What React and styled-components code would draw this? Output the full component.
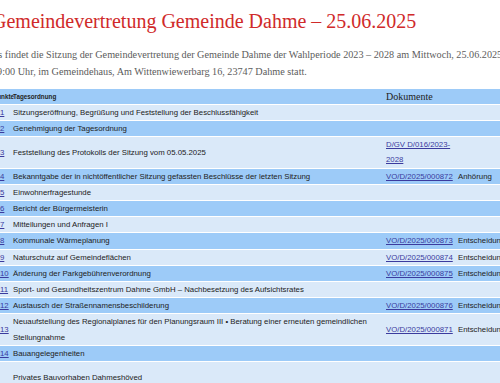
import React from 'react'
import styled, { createGlobalStyle, css } from 'styled-components'

const GlobalStyle = createGlobalStyle`
    body{
        margin: 0;
        background: #fff;
        overflow: hidden;
    }
`

const Page = styled.div`
    width: 560px;
    margin-left: -8px;
`

const Title = styled.h1`
    margin: 9px 0 0;
    font-family: 'Liberation Serif', 'Times New Roman', serif;
    font-weight: 400;
    font-size: 20px;
    line-height: 24px;
    color: #d02a2a;
    white-space: nowrap;
`

const Intro = styled.p`
    margin: 12.5px 0 0;
    width: 560px;
    font-family: 'Liberation Serif', 'Times New Roman', serif;
    font-size: 10.2px;
    line-height: 17px;
    color: #5c5c5c;
    white-space: nowrap;
`

const Table = styled.table`
    margin-top: 8px;
    width: 560px;
    border-collapse: separate;
    border-spacing: 0 1px;
    table-layout: fixed;
    font-family: 'Liberation Sans', Arial, sans-serif;
    font-size: 7.8px;
    line-height: 15.2px;
    color: #222;
`

const Row = styled.tr`
    background: ${({dark}) => dark ? '#9dcbf8' : '#dae9f9'};
`

const Head = styled.th`
    padding: 0 1px;
    text-align: left;
    vertical-align: middle;
    font-weight: 700;
    font-size: 6.3px;

    ${({serif}) => serif && css`
        font-family: 'Liberation Serif', 'Times New Roman', serif;
        font-weight: 400;
        font-size: 10px;
    `}
`

const Cell = styled.td`
    padding: 0 1px;
    vertical-align: middle;

    ${({sub}) => sub && css`
        padding-top: 8px;
    `}
`

const NumCell = styled(Cell)`
    padding-left: 8px;
`

const DocCell = styled(Cell)`
    padding: 0 4px 0 1px;
`

const Link = styled.a`
    color: #3b3b9e;
    text-decoration: underline;
`

const items = [
    {nr: '1', title: 'Sitzungseröffnung, Begrüßung und Feststellung der Beschlussfähigkeit'},
    {nr: '2', title: 'Genehmigung der Tagesordnung'},
    {nr: '3', title: 'Feststellung des Protokolls der Sitzung vom 05.05.2025', doc: 'D/GV D/016/2023-2028'},
    {nr: '4', title: 'Bekanntgabe der in nichtöffentlicher Sitzung gefassten Beschlüsse der letzten Sitzung', doc: 'VO/D/2025/000872', kind: 'Anhörung'},
    {nr: '5', title: 'Einwohnerfragestunde'},
    {nr: '6', title: 'Bericht der Bürgermeisterin'},
    {nr: '7', title: 'Mitteilungen und Anfragen I'},
    {nr: '8', title: 'Kommunale Wärmeplanung', doc: 'VO/D/2025/000873', kind: 'Entscheidung'},
    {nr: '9', title: 'Naturschutz auf Gemeindeflächen', doc: 'VO/D/2025/000874', kind: 'Entscheidung'},
    {nr: '10', title: 'Änderung der Parkgebührenverordnung', doc: 'VO/D/2025/000875', kind: 'Entscheidung'},
    {nr: '11', title: 'Sport- und Gesundheitszentrum Dahme GmbH – Nachbesetzung des Aufsichtsrates'},
    {nr: '12', title: 'Austausch der Straßennamensbeschilderung', doc: 'VO/D/2025/000876', kind: 'Entscheidung'},
    {nr: '13', title: 'Neuaufstellung des Regionalplanes für den Planungsraum III • Beratung einer erneuten gemeindlichen Stellungnahme', doc: 'VO/D/2025/000871', kind: 'Entscheidung'},
    {nr: '14', title: 'Bauangelegenheiten'},
    {nr: '', title: 'Privates Bauvorhaben Dahmeshöved', sub: true},
]

const App = () => {
    return (
        <Page>
            <GlobalStyle />
            <Title>Gemeindevertretung Gemeinde Dahme – 25.06.2025</Title>
            <Intro>
                Es findet die Sitzung der Gemeindevertretung der Gemeinde Dahme der Wahlperiode 2023 – 2028 am Mittwoch, 25.06.2025 um<br />
                19:00 Uhr, im Gemeindehaus, Am Wittenwiewerbarg 16, 23747 Dahme statt.
            </Intro>
            <Table>
                <colgroup>
                    <col style={{width: '20px'}} />
                    <col style={{width: '373px'}} />
                    <col style={{width: '72px'}} />
                    <col />
                </colgroup>
                <thead>
                    <Row dark>
                        <Head>Punkte</Head>
                        <Head>Tagesordnung</Head>
                        <Head serif colSpan={2}>Dokumente</Head>
                    </Row>
                </thead>
                <tbody>
                {
                    items.map((item, index) =>
                        <Row dark={index % 2 === 1} key={index}>
                            <NumCell>{item.nr && <Link href="#">{item.nr}</Link>}</NumCell>
                            <Cell sub={item.sub}>{item.title}</Cell>
                            <DocCell>{item.doc && <Link href="#">{item.doc}</Link>}</DocCell>
                            <Cell>{item.kind}</Cell>
                        </Row>
                    )
                }
                </tbody>
            </Table>
        </Page>
    )
}

export default App
